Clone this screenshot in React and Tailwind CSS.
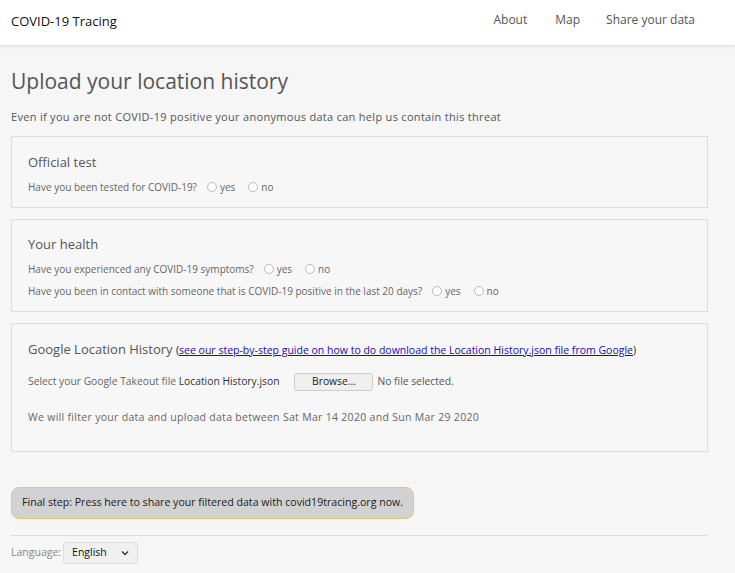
import React from "react";

function Radio({ label }) {
  return (
    <label className="inline-flex items-center">
      <span className="inline-block w-[10px] h-[10px] rounded-full border border-[#bbb] bg-white mr-[3px]"></span>
      <span>{label}</span>
    </label>
  );
}

function Question({ text }) {
  return (
    <div className="flex items-center text-[10px] text-[#666] leading-[22px]">
      <span>{text}</span>
      <span className="w-[10px]"></span>
      <Radio label="yes" />
      <span className="w-[13px]"></span>
      <Radio label="no" />
    </div>
  );
}

export default function App() {
  return (
    <div className="min-h-[573px] bg-[#f6f6f6]" style={{ fontFamily: '"Open Sans", sans-serif' }}>
      <header className="h-[45px] bg-white shadow-[0_1px_4px_rgba(0,0,0,0.12)] flex items-center justify-between pl-[11px] pr-[40px]">
        <div className="text-[13px] text-[#111] mt-[-2px]">COVID-19 Tracing</div>
        <nav className="flex gap-[26px] text-[12px] text-[#555] mt-[-6px]">
          <span>About</span>
          <span className="ml-[2px]">Map</span>
          <span>Share your data</span>
        </nav>
      </header>
      <main className="px-[11px] w-[719px]">
        <h1 className="text-[21px] text-[#555] leading-[32px] mt-[20px]">Upload your location history</h1>
        <p className="text-[11px] text-[#555] tracking-[0.3px] mt-[12px] leading-[16px]">
          Even if you are not COVID-19 positive your anonymous data can help us contain this threat
        </p>
        <section className="mt-[11px] border border-[#ddd] bg-[#f7f7f7] h-[72px] pt-[15px] px-[16px]">
          <h2 className="text-[13px] text-[#555] leading-[20px]">Official test</h2>
          <div className="mt-[4px]">
            <Question text="Have you been tested for COVID-19?" />
          </div>
        </section>
        <section className="mt-[11px] border border-[#ddd] bg-[#f7f7f7] h-[93px] pt-[14px] px-[16px]">
          <h2 className="text-[13px] text-[#555] leading-[20px]">Your health</h2>
          <div className="mt-[4px]">
            <Question text="Have you experienced any COVID-19 symptoms?" />
            <Question text="Have you been in contact with someone that is COVID-19 positive in the last 20 days?" />
          </div>
        </section>
        <section className="mt-[11px] border border-[#ddd] bg-[#f7f7f7] h-[129px] pt-[15px] px-[16px]">
          <h2 className="text-[13px] text-[#555] leading-[20px] whitespace-nowrap">
            Google Location History{" "}
            <span className="text-[10.5px] text-[#222]">
              (<a className="text-[#1a0dab] underline">see our step-by-step guide on how to do download the Location History.json file from Google</a>)
            </span>
          </h2>
          <div className="flex items-center mt-[13px] text-[10.3px] text-[#666]">
            <span>Select your Google Takeout file <span className="text-[#333]">Location History.json</span></span>
            <span className="ml-[15px] inline-flex items-center justify-center w-[79px] h-[18px] border border-[#ccc] rounded-[3px] bg-[#f0f0f0] text-[#222]">Browse...</span>
            <span className="ml-[4px] text-[#555]">No file selected.</span>
          </div>
          <p className="mt-[19px] text-[10.5px] text-[#666] tracking-[0.3px]">
            We will filter your data and upload data between Sat Mar 14 2020 and Sun Mar 29 2020
          </p>
        </section>
        <button className="block mt-[35px] w-[403px] h-[32px] bg-[#d2d2d2] border-[1.5px] border-[#e8c275] rounded-[8px] text-left pl-[10px] text-[10.6px] text-[#1a1a1a] whitespace-nowrap">
          Final step: Press here to share your filtered data with covid19tracing.org now.
        </button>
        <hr className="mt-[16px] border-0 border-t border-[#ddd] w-[697px]" />
        <div className="flex items-center mt-[6px] text-[10.5px]">
          <span className="text-[#888]">Language:</span>
          <span className="ml-[2px] inline-flex items-center justify-between w-[75px] h-[22px] border border-[#ddd] rounded-[3px] bg-[#f0f0f0] pl-[8px] pr-[8px] text-[#111]">
            English
            <svg width="8" height="6" viewBox="0 0 8 6"><path d="M1 1.5 L4 4.5 L7 1.5" stroke="#333" strokeWidth="1.3" fill="none" /></svg>
          </span>
        </div>
      </main>
    </div>
  );
}
